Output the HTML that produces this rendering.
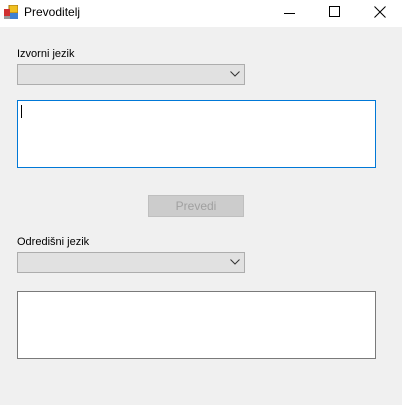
<!DOCTYPE html>
<html><head><style>
body{margin:0;width:402px;height:405px;background:#f0f0f0;font-family:"Liberation Sans",sans-serif;font-size:12px;position:relative;overflow:hidden}
div{position:absolute;box-sizing:border-box}
.t{top:0;left:0;width:402px;height:27px;background:#fff}
.cb{background:#e1e1e1;border:1px solid #adadad;width:228px;height:21px;left:17px}
.lb{left:17px;color:#000;font-size:11px}
.tb{background:#fff;left:17px;width:359px;height:67px}
</style></head><body>
<div class="t">
 <svg style="position:absolute;left:4px;top:5px" width="14" height="14"><rect x="5" y="0" width="9" height="8" fill="#f0c020" stroke="#a07010" stroke-width="1"/><rect x="0" y="4" width="6" height="7" fill="#d03030"/><rect x="6" y="8" width="8" height="6" fill="#4080d0"/><rect x="0" y="11" width="6" height="3" fill="#999"/></svg>
 <div style="left:24px;top:5px;font-size:12px">Prevoditelj</div>
 <div style="left:284px;top:13px;width:11px;height:1px;background:#000"></div>
 <div style="left:329px;top:6px;width:11px;height:11px;border:1px solid #000"></div>
 <svg style="position:absolute;left:374px;top:6px" width="12" height="12"><path d="M0.5 0.5L11.5 11.5M11.5 0.5L0.5 11.5" stroke="#000" stroke-width="1"/></svg>
</div>
<div class="lb" style="top:48px">Izvorni jezik</div>
<div class="cb" style="top:64px"><svg style="position:absolute;right:4px;top:6px" width="10" height="6"><path d="M0.5 0.5L5 5L9.5 0.5" stroke="#333" fill="none"/></svg></div>
<div class="tb" style="top:100px;height:68px;border:1px solid #0078d7"><div style="left:3px;top:4px;width:1px;height:13px;background:#000"></div></div>
<div style="left:148px;top:195px;width:96px;height:22px;background:#cccccc;border:1px solid #bfbfbf;color:#a0a0a0;text-align:center;line-height:20px">Prevedi</div>
<div class="lb" style="top:236px">Odredišni jezik</div>
<div class="cb" style="top:252px"><svg style="position:absolute;right:4px;top:6px" width="10" height="6"><path d="M0.5 0.5L5 5L9.5 0.5" stroke="#333" fill="none"/></svg></div>
<div class="tb" style="top:291px;height:68px;border:1px solid #7a7a7a"></div>
</body></html>
